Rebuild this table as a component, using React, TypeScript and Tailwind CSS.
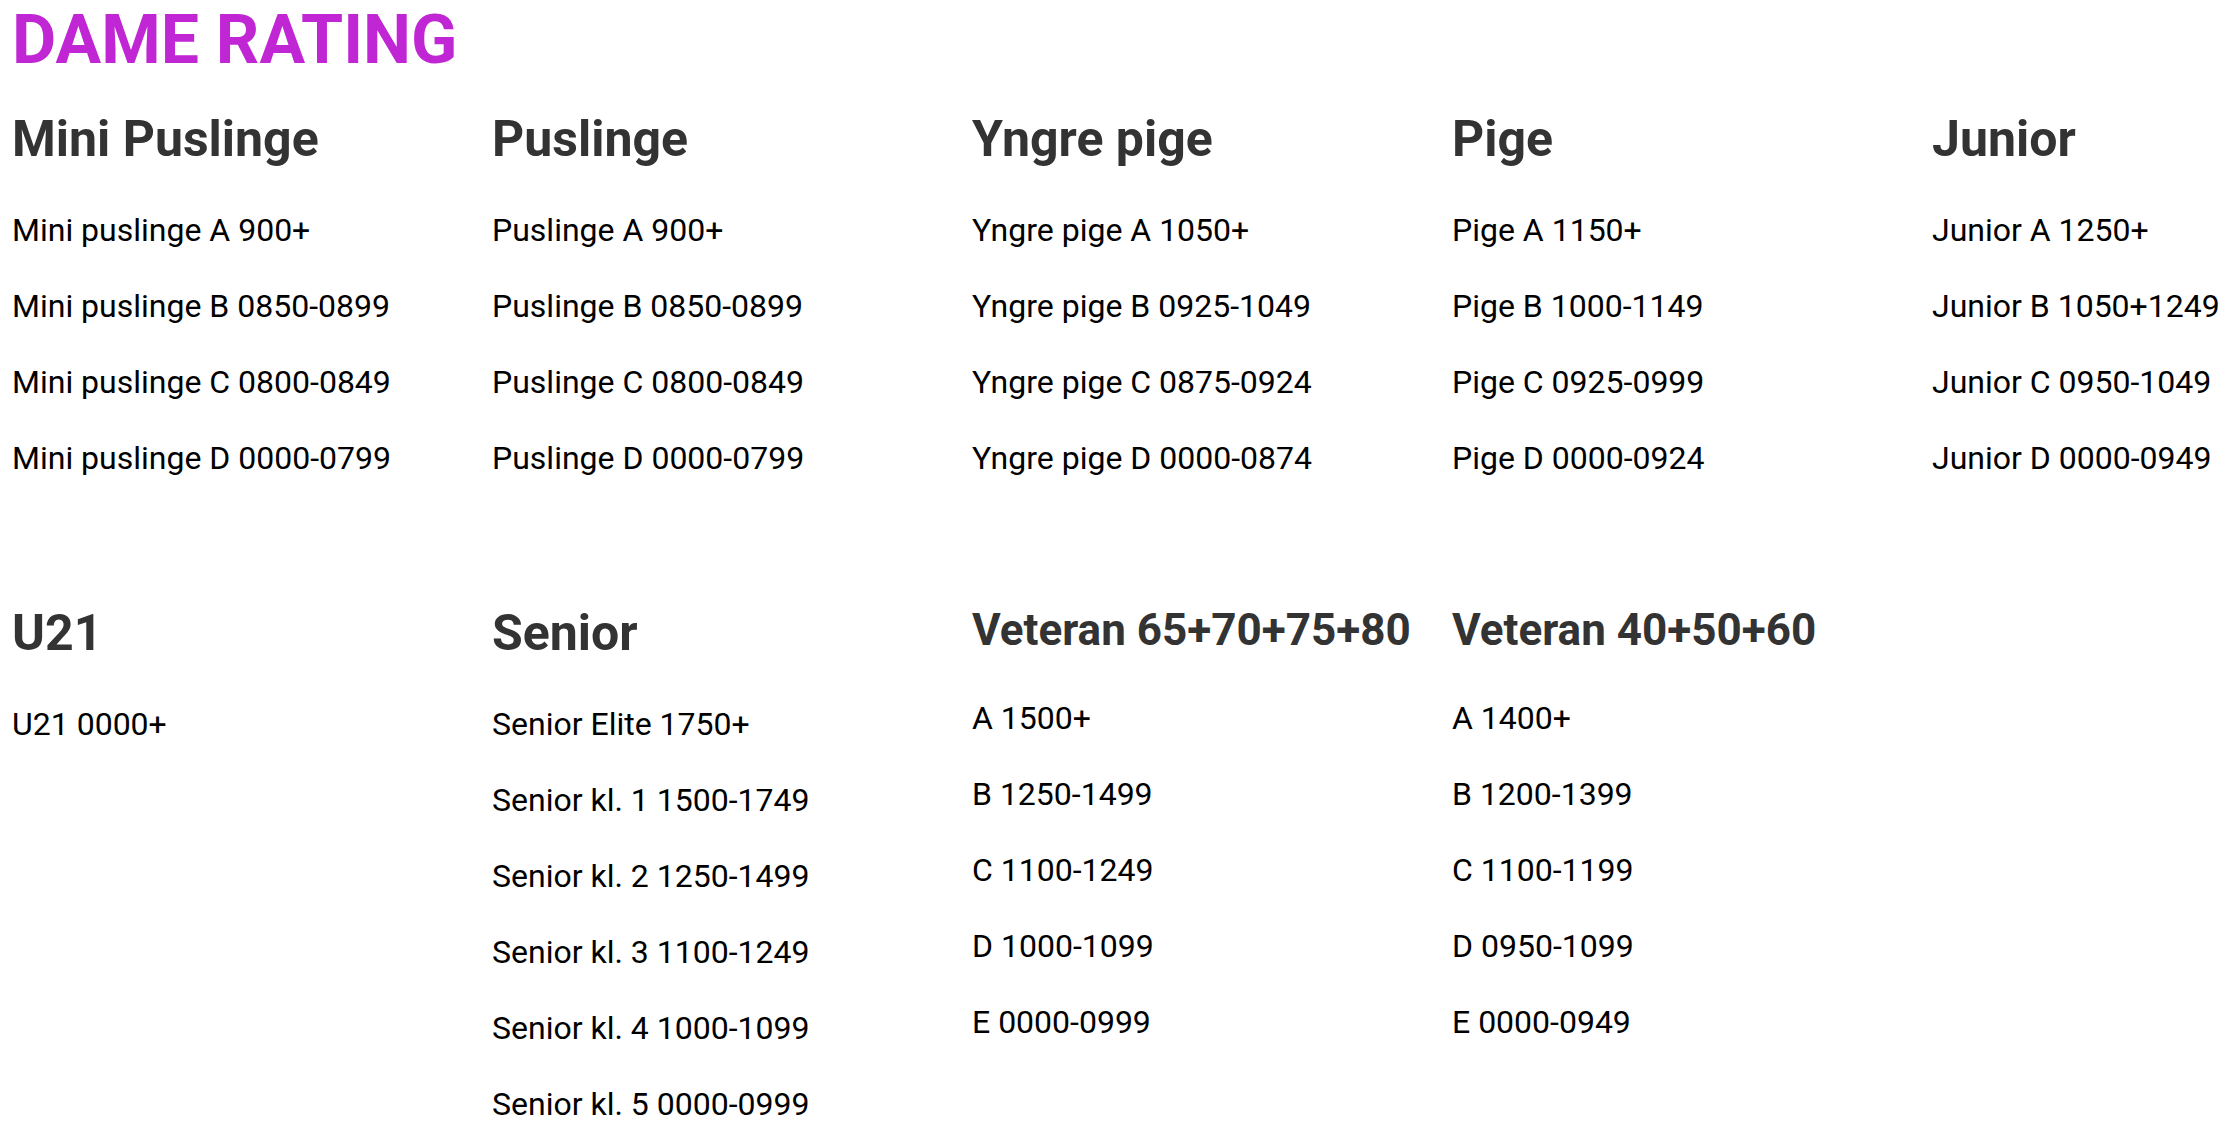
const groups: { title: string; small?: boolean; items: string[] }[][] = [
  [
    {
      title: 'Mini Puslinge',
      items: ['Mini puslinge A 900+', 'Mini puslinge B 0850-0899', 'Mini puslinge C 0800-0849', 'Mini puslinge D 0000-0799'],
    },
    {
      title: 'Puslinge',
      items: ['Puslinge A 900+', 'Puslinge B 0850-0899', 'Puslinge C 0800-0849', 'Puslinge D 0000-0799'],
    },
    {
      title: 'Yngre pige',
      items: ['Yngre pige A 1050+', 'Yngre pige B 0925-1049', 'Yngre pige C 0875-0924', 'Yngre pige D 0000-0874'],
    },
    {
      title: 'Pige',
      items: ['Pige A 1150+', 'Pige B 1000-1149', 'Pige C 0925-0999', 'Pige D 0000-0924'],
    },
    {
      title: 'Junior',
      items: ['Junior A 1250+', 'Junior B 1050+1249', 'Junior C 0950-1049', 'Junior D 0000-0949'],
    },
  ],
  [
    { title: 'U21', items: ['U21 0000+'] },
    {
      title: 'Senior',
      items: [
        'Senior Elite 1750+',
        'Senior kl. 1 1500-1749',
        'Senior kl. 2 1250-1499',
        'Senior kl. 3 1100-1249',
        'Senior kl. 4 1000-1099',
        'Senior kl. 5 0000-0999',
      ],
    },
    {
      title: 'Veteran 65+70+75+80',
      small: true,
      items: ['A 1500+', 'B 1250-1499', 'C 1100-1249', 'D 1000-1099', 'E 0000-0999'],
    },
    {
      title: 'Veteran 40+50+60',
      small: true,
      items: ['A 1400+', 'B 1200-1399', 'C 1100-1199', 'D 0950-1099', 'E 0000-0949'],
    },
  ],
];

function Group({ title, small, items }: { title: string; small?: boolean; items: string[] }) {
  return (
    <div className="flex flex-col">
      <h2
        className={
          small
            ? 'whitespace-nowrap text-[44px] leading-[53px] font-bold text-[#333333]'
            : 'whitespace-nowrap text-[50px] leading-[58px] font-bold text-[#333333]'
        }
      >
        {title}
      </h2>
      <ul className={small ? 'mt-[37px] flex flex-col gap-[28px]' : 'mt-[38px] flex flex-col gap-[28px]'}>
        {items.map((item) => (
          <li key={item} className="whitespace-nowrap text-[32px] leading-[48px] text-black">
            {item}
          </li>
        ))}
      </ul>
    </div>
  );
}

export default function App() {
  return (
    <div className="min-h-screen w-full overflow-hidden bg-white pl-[12px] font-['Roboto','Liberation_Sans',sans-serif]">
      <h1 className="text-[68px] leading-[80px] font-bold text-[#c026d3]">DAME RATING</h1>
      <div className="mt-[30px] flex flex-col gap-[122px]">
        {groups.map((row, i) => (
          <div key={i} className="grid grid-cols-[repeat(5,480px)] items-start">
            {row.map((g) => (
              <Group key={g.title} {...g} />
            ))}
          </div>
        ))}
      </div>
    </div>
  );
}
